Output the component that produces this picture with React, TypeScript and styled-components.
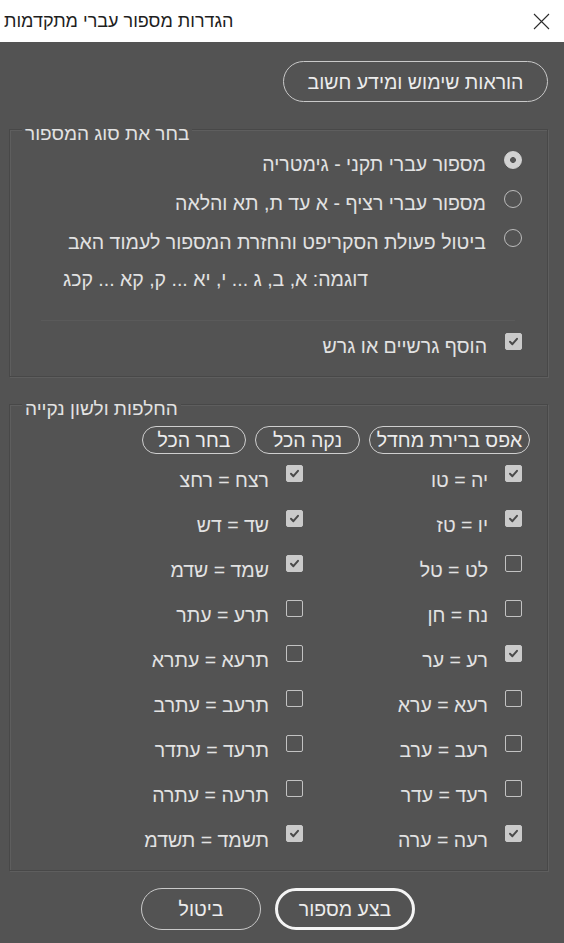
import React from 'react';
import styled, { createGlobalStyle } from 'styled-components';

const GlobalStyle = createGlobalStyle`
  html, body {
    margin : 0;
    padding : 0;
    background : #535353;
  }
  * {
    box-sizing : border-box;
  }
`;

const radios = [
  { label: 'מספור עברי תקני - גימטריה', selected: true },
  { label: 'מספור עברי רציף - א עד ת, תא והלאה', selected: false },
  { label: 'ביטול פעולת הסקריפט והחזרת המספור לעמוד האב', selected: false },
];

// each row: right column, then left column
const swaps: [string, boolean, string, boolean][] = [
  ['יה = טו', true, 'רצח = רחצ', true],
  ['יו = טז', true, 'שד = דש', true],
  ['לט = טל', false, 'שמד = שדמ', true],
  ['נח = חן', false, 'תרע = עתר', false],
  ['רע = ער', true, 'תרעא = עתרא', false],
  ['רעא = ערא', false, 'תרעב = עתרב', false],
  ['רעב = ערב', false, 'תרעד = עתדר', false],
  ['רעד = עדר', false, 'תרעה = עתרה', false],
  ['רעה = ערה', true, 'תשמד = תשדמ', true],
];

const Check = ({checked}:{checked:boolean}) => (
  <Box $checked={checked}>
    {checked && (
      <svg width="11" height="11" viewBox="0 0 11 11">
        <path d="M2 5.8 L4.4 8.2 L9 2.8" fill="none" stroke="#4a4a4a" strokeWidth="2" strokeLinecap="round" strokeLinejoin="round"/>
      </svg>
    )}
  </Box>
);

const App = () => {
    return (
      <>
        <GlobalStyle/>
        <Window>
          <TitleBar>
            <Title dir="rtl">הגדרות מספור עברי מתקדמות</Title>
            <svg width="17" height="17" viewBox="0 0 17 17">
              <path d="M1 1 L16 16 M16 1 L1 16" stroke="#2b2b2b" strokeWidth="1.1" fill="none"/>
            </svg>
          </TitleBar>
          <Body>
            <TopRow>
              <PillBtn $w={265} $h={41}>הוראות שימוש ומידע חשוב</PillBtn>
            </TopRow>

            <Frame $h={248} $top={27}>
              <Legend dir="rtl">בחר את סוג המספור</Legend>
              <Inner dir="rtl" $pt={21}>
                {radios.map((r) => (
                  <RadioRow key={r.label}>
                    <Radio $selected={r.selected}/>
                    <Label>{r.label}</Label>
                  </RadioRow>
                ))}
                <Example>דוגמה: א, ב, ג ... י, יא ... ק, קא ... קכג</Example>
                <Separator/>
                <CheckRow>
                  <Check checked={true}/>
                  <Label>הוסף גרשיים או גרש</Label>
                </CheckRow>
              </Inner>
            </Frame>

            <Frame $h={467} $top={27}>
              <Legend dir="rtl">החלפות ולשון נקייה</Legend>
              <Inner dir="rtl" $pt={21}>
                <BtnRow>
                  <SmallBtn $w={161}>אפס ברירת מחדל</SmallBtn>
                  <SmallBtn $w={105}>נקה הכל</SmallBtn>
                  <SmallBtn $w={104}>בחר הכל</SmallBtn>
                </BtnRow>
                <Grid>
                  {swaps.map(([a, ca, b, cb]) => (
                    <React.Fragment key={a}>
                      <GridItem>
                        <Check checked={ca}/>
                        <ItemLabel>{a}</ItemLabel>
                      </GridItem>
                      <GridItem>
                        <Check checked={cb}/>
                        <ItemLabel>{b}</ItemLabel>
                      </GridItem>
                    </React.Fragment>
                  ))}
                </Grid>
              </Inner>
            </Frame>

            <Footer dir="rtl">
              <PillBtn $w={140} $h={42} $primary>בצע מספור</PillBtn>
              <PillBtn $w={120} $h={42}>ביטול</PillBtn>
            </Footer>
          </Body>
        </Window>
      </>
    )
}

const Window = styled.div`
  width : 564px;
  height : 943px;
  background : #535353;
  display : flex;
  flex-direction : column;
  font-family : "Liberation Sans", "DejaVu Sans", sans-serif;
  overflow : hidden;
`;

const TitleBar = styled.div`
  height : 42px;
  background : #ffffff;
  display : flex;
  align-items : center;
  justify-content : space-between;
  padding : 0 14px 0 4px;
  flex-shrink : 0;
`;

const Title = styled.div`
  font-size : 18px;
  color : #1e1e1e;
`;

const Body = styled.div`
  display : flex;
  flex-direction : column;
`;

const TopRow = styled.div`
  display : flex;
  justify-content : flex-end;
  padding : 19px 16px 0 0;
`;

const PillBtn = styled.div<{$w:number; $h:number; $primary?:boolean}>`
  width : ${p => p.$w}px;
  height : ${p => p.$h}px;
  border : ${p => p.$primary ? '3px solid #f4f4f4' : '1px solid #c9c9c9'};
  border-radius : 999px;
  display : flex;
  align-items : center;
  justify-content : center;
  color : #ececec;
  font-size : 19.5px;
  padding-top : 1px;
`;

const Frame = styled.div<{$h:number; $top:number}>`
  position : relative;
  height : ${p => p.$h}px;
  margin : ${p => p.$top}px 16px 0 9px;
  border : 1px solid #484848;
  box-shadow : 1px 1px 0 #5e5e5e, inset 1px 1px 0 #5e5e5e;
`;

const Legend = styled.span`
  position : absolute;
  top : -7px;
  left : 12px;
  padding : 0 3px;
  line-height : 22px;
  background : #535353;
  color : #e2e2e2;
  font-size : 19px;
`;

const Inner = styled.div<{$pt:number}>`
  padding : ${p => p.$pt}px 25px 0 25px;
  display : flex;
  flex-direction : column;
`;

const RadioRow = styled.div`
  height : 39px;
  display : flex;
  align-items : flex-start;
  gap : 18px;
`;

const Radio = styled.span<{$selected:boolean}>`
  width : 18px;
  height : 18px;
  flex-shrink : 0;
  border-radius : 50%;
  border : 1px solid ${p => p.$selected ? '#d2d2d2' : '#bcbcbc'};
  background : ${p => p.$selected ? 'radial-gradient(circle, #555 0 2.6px, #d2d2d2 3.2px)' : 'transparent'};
`;

const Label = styled.span`
  color : #e2e2e2;
  font-size : 19.5px;
  line-height : 22px;
  margin-top : 2px;
  white-space : nowrap;
`;

const Example = styled.div`
  color : #e2e2e2;
  font-size : 19.5px;
  line-height : 22px;
  margin-right : 154px;
  white-space : nowrap;
`;

const Separator = styled.div`
  height : 1px;
  background : #464646;
  border-bottom : 1px solid #5a5a5a;
  margin : 30px 7px 0 6px;
`;

const CheckRow = styled.div`
  display : flex;
  align-items : flex-start;
  gap : 18px;
  margin-top : 12px;
`;

const Box = styled.span<{$checked:boolean}>`
  width : 17px;
  height : 17px;
  flex-shrink : 0;
  border-radius : 2px;
  display : flex;
  align-items : center;
  justify-content : center;
  background : ${p => p.$checked ? '#cacaca' : 'transparent'};
  border : 1px solid ${p => p.$checked ? '#cacaca' : '#c2c2c2'};
`;

const BtnRow = styled.div`
  display : flex;
  gap : 9px;
  margin-right : -8px;
`;

const SmallBtn = styled.div<{$w:number}>`
  width : ${p => p.$w}px;
  height : 28px;
  border : 1px solid #cfcfcf;
  border-radius : 999px;
  display : flex;
  align-items : center;
  justify-content : center;
  color : #ececec;
  font-size : 19.5px;
  white-space : nowrap;
`;

const Grid = styled.div`
  display : grid;
  grid-template-columns : 219px 219px;
  grid-auto-rows : 45px;
  margin-top : 11px;
`;

const GridItem = styled.div`
  display : flex;
  align-items : flex-start;
  gap : 17px;
`;

const ItemLabel = styled.span`
  color : #e2e2e2;
  font-size : 19.5px;
  line-height : 22px;
  margin-top : 4px;
  white-space : nowrap;
`;

const Footer = styled.div`
  display : flex;
  justify-content : center;
  gap : 14px;
  margin-top : 17px;
  padding-right : 8px;
`;

export default App;
